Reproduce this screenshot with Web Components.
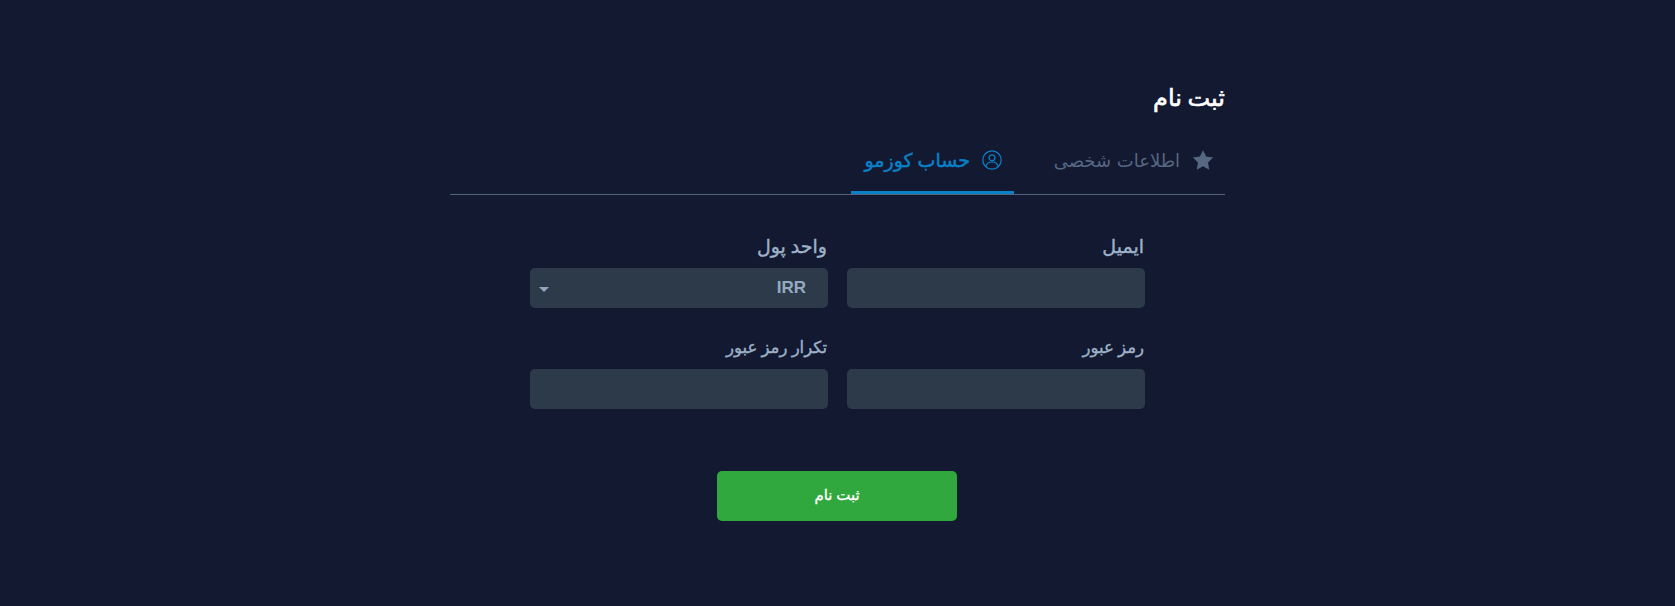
<!DOCTYPE html>
<html lang="fa" dir="rtl">
<head>
<meta charset="utf-8">
<title>ثبت نام</title>
<style>
    html, body { margin: 0; height: 100%; background: #131931; }
    body { font-family: "DejaVu Sans", sans-serif; }
</style>
</head>
<body>
<signup-page>
    <signup-tabs></signup-tabs>
    <form-field label="ایمیل" size="19"></form-field>
    <form-field label="واحد پول" size="19" value="IRR" select></form-field>
    <form-field label="رمز عبور" size="16.5"></form-field>
    <form-field label="تکرار رمز عبور" size="16.5"></form-field>
</signup-page>
<script>
class SignupPage extends HTMLElement {
    constructor() {
        super();
        this.attachShadow({ mode: 'open' });
        this.shadowRoot.innerHTML = `
            <style>
                :host {
                    display: flex;
                    flex-direction: column;
                    align-items: center;
                    padding-top: 83px;
                    box-sizing: border-box;
                    height: 606px;
                }
                .box { width: 775px; }
                h1 {
                    margin: 0;
                    height: 32px;
                    font-size: 24px;
                    line-height: 30px;
                    font-weight: 400;
                    -webkit-text-stroke: 0.6px #fff;
                    word-spacing: -2px;
                    color: #fff;
                }
                .grid {
                    display: grid;
                    grid-template-columns: 298px 298px;
                    justify-content: center;
                    column-gap: 19px;
                    row-gap: 21px;
                    margin-top: 33px;
                }
                button {
                    display: block;
                    width: 240px;
                    height: 50px;
                    margin: 62px 268px 0 auto;
                    padding: 0 0 2px;
                    border: none;
                    border-radius: 5px;
                    background: #30a83d;
                    color: #fff;
                    font: 400 15px "DejaVu Sans", sans-serif;
                    -webkit-text-stroke: 0.3px #fff;
                    word-spacing: -1px;
                }
            </style>
            <div class="box">
                <h1>ثبت نام</h1>
                <slot name="tabs"></slot>
                <div class="grid"><slot></slot></div>
                <button type="button">ثبت نام</button>
            </div>
        `;
    }

    connectedCallback() {
        this.querySelector('signup-tabs').slot = 'tabs';
    }
}

class SignupTabs extends HTMLElement {
    constructor() {
        super();
        this.attachShadow({ mode: 'open' });
        this.shadowRoot.innerHTML = `
            <style>
                :host {
                    display: flex;
                    height: 64px;
                    margin-top: 16px;
                    border-bottom: 1px solid #51647f;
                    box-sizing: border-box;
                }
                .tab {
                    display: flex;
                    align-items: center;
                    gap: 12px;
                    height: 63px;
                    box-sizing: border-box;
                    font-size: 18px;
                    color: #566782;
                }
                .tab.one { width: 211px; padding: 0 11px 5px 0; }
                .tab.two {
                    width: 163px;
                    padding: 0 12px 2px 0;
                    font-size: 19px;
                    word-spacing: -1px;
                    color: #0a80c6;
                    border-bottom: 3px solid #0a80c6;
                }
                .tab.two span { -webkit-text-stroke: 0.5px #0a80c6; }
                svg { flex: none; display: block; }
            </style>
            <div class="tab one">
                <svg width="22" height="22" viewBox="0 0 24 24" fill="#566782"><path d="M12 1.3l3.4 7 7.6 1.1-5.5 5.4 1.3 7.7L12 18.9l-6.8 3.6 1.3-7.7L1 9.4l7.6-1.1z"/></svg>
                <span>اطلاعات شخصی</span>
            </div>
            <div class="tab two">
                <svg width="20" height="20" viewBox="0 0 20 20" fill="none" stroke="#0a80c6" stroke-width="1.2"><circle cx="10" cy="10" r="9.2"/><circle cx="10" cy="7.8" r="3"/><path d="M4 16.4c.5-3 2.8-4.4 6-4.4s5.5 1.4 6 4.4"/></svg>
                <span>حساب کوزمو</span>
            </div>
        `;
    }
}

class FormField extends HTMLElement {
    constructor() {
        super();
        this.attachShadow({ mode: 'open' });
    }

    connectedCallback() {
        const value = this.getAttribute('value') || '';
        const arrow = this.hasAttribute('select') ? '<i></i>' : '';
        this.shadowRoot.innerHTML = `
            <style>
                :host { display: block; }
                label {
                    display: block;
                    height: 40px;
                    line-height: 37px;
                    padding-right: 1px;
                    font-size: ${this.getAttribute('size')}px;
                    -webkit-text-stroke: 0.4px #9db1c8;
                    word-spacing: -1px;
                    color: #9db1c8;
                }
                .control {
                    position: relative;
                    height: 40px;
                    padding: 0 22px;
                    border-radius: 5px;
                    background: #2d3a4a;
                    font: 700 17px/40px "Liberation Sans", sans-serif;
                    color: #95aac0;
                }
                i {
                    position: absolute;
                    left: 9px;
                    top: 19px;
                    border: 5px solid transparent;
                    border-top: 5px solid #93a8c0;
                    border-bottom: 0;
                }
            </style>
            <label>${this.getAttribute('label')}</label>
            <div class="control">${value}${arrow}</div>
        `;
    }
}

customElements.define('signup-tabs', SignupTabs);
customElements.define('form-field', FormField);
customElements.define('signup-page', SignupPage);
</script>
</body>
</html>
